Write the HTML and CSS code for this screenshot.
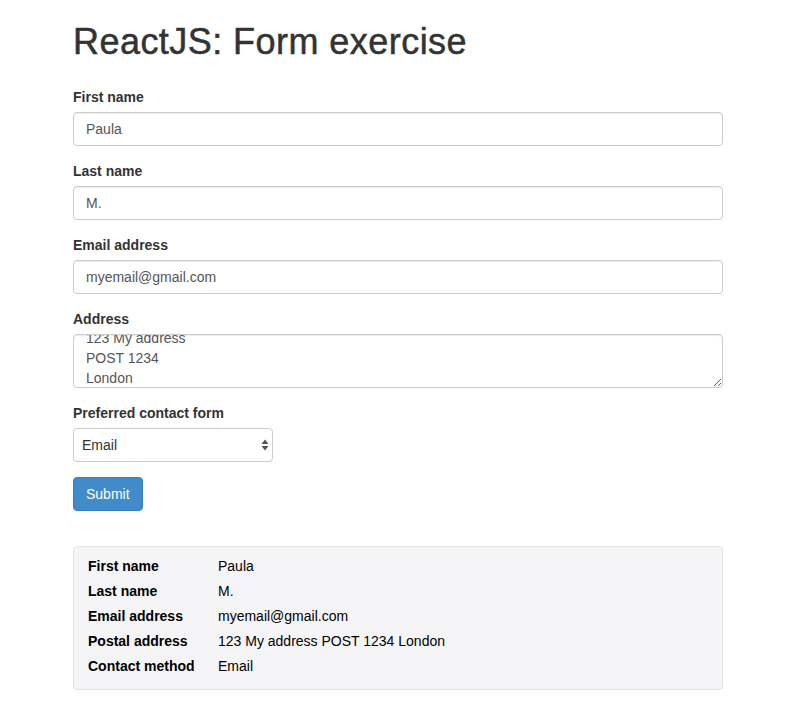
FILE: index.html
```html
<!DOCTYPE html>
<html>
<head>
<meta charset="utf-8">
<link rel="stylesheet" href="styles.css">
</head>
<body>
<div class="page">
  <h1 class="title">ReactJS: Form exercise</h1>
  <form class="form">
    <div class="group">
      <label class="label">First name</label>
      <input class="control" type="text" value="Paula">
    </div>
    <div class="group">
      <label class="label">Last name</label>
      <input class="control" type="text" value="M.">
    </div>
    <div class="group">
      <label class="label">Email address</label>
      <input class="control" type="text" value="myemail@gmail.com">
    </div>
    <div class="group">
      <label class="label">Address</label>
      <textarea class="control area" id="addr">123 My address
POST 1234
London</textarea>
    </div>
    <div class="group">
      <label class="label">Preferred contact form</label>
      <div class="select-wrap">
        <select class="select">
          <option>Email</option>
          <option>Post</option>
        </select>
        <svg class="arrows" width="8" height="12" viewBox="0 0 8 12"><path d="M4 0.5 L7.5 5 L0.5 5 Z M4 11.5 L7.5 7 L0.5 7 Z" fill="#555"/></svg>
      </div>
    </div>
    <button type="button" class="btn">Submit</button>
  </form>
  <div class="well">
    <div class="k">First name</div><div class="v">Paula</div>
    <div class="k">Last name</div><div class="v">M.</div>
    <div class="k">Email address</div><div class="v">myemail@gmail.com</div>
    <div class="k">Postal address</div><div class="v">123 My address POST 1234 London</div>
    <div class="k">Contact method</div><div class="v">Email</div>
  </div>
</div>
<script src="script.js"></script>
</body>
</html>
```
FILE: styles.css
```css
* { box-sizing: border-box; }
body {
  margin: 0;
  font-family: "Liberation Sans", Arial, sans-serif;
  font-size: 14px;
  line-height: 20px;
  color: #333;
  background: #fff;
}
.page {
  width: 723px;
  padding-left: 73px;
}
.title {
  margin: 22px 0 25px;
  font-size: 36px;
  line-height: 39.6px;
  font-weight: 500;
  letter-spacing: 0.45px;
  -webkit-text-stroke: 0.5px #333;
  color: #333;
}
.form { margin: 0; }
.group { margin-bottom: 15px; }
.label {
  display: block;
  font-weight: bold;
  margin-bottom: 5px;
}
.control {
  display: block;
  width: 100%;
  height: 34px;
  padding: 6px 12px;
  font-family: inherit;
  font-size: 14px;
  line-height: 20px;
  color: #555;
  background: #fff;
  border: 1px solid #ccc;
  border-radius: 4px;
  box-shadow: inset 0 1px 1px rgba(0,0,0,.075);
  outline: none;
  margin: 0;
}
.area {
  height: 54px;
  resize: vertical;
  overflow: auto;
}
.select-wrap {
  position: relative;
  width: 200px;
}
.select {
  display: block;
  width: 200px;
  height: 34px;
  padding: 6px 8px;
  font-family: inherit;
  font-size: 14px;
  color: #333;
  background: #fff;
  border: 1px solid #ccc;
  border-radius: 4px;
  -webkit-appearance: none;
  appearance: none;
  outline: none;
  margin: 0;
}
.arrows {
  position: absolute;
  right: 4px;
  top: 11px;
  pointer-events: none;
}
.btn {
  display: block;
  height: 34px;
  padding: 6px 12px;
  font-family: inherit;
  font-size: 14px;
  line-height: 20px;
  color: #fff;
  background: #428bca;
  border: 1px solid #357ebd;
  border-radius: 4px;
  margin: 0;
}
.well {
  margin-top: 35px;
  width: 650px;
  display: grid;
  grid-template-columns: 130px 1fr;
  row-gap: 5px;
  padding: 9px 14px 13px;
  background: #f5f5f7;
  border: 1px solid #e3e3e3;
  border-radius: 4px;
  color: #000;
}
.k { font-weight: bold; }
```
FILE: script.js
```js
document.getElementById('addr').scrollTop = 13;
```
